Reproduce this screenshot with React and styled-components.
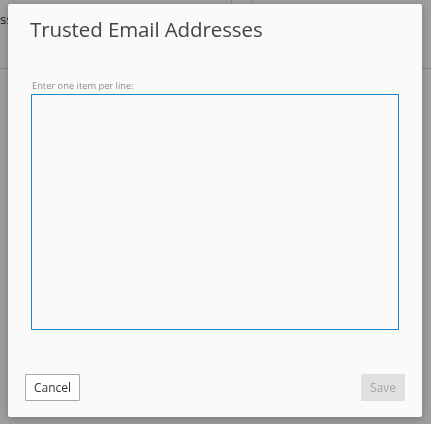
import React, { useState } from 'react'
import styled, { createGlobalStyle } from 'styled-components'

const Global = createGlobalStyle`
    html, body {
        margin: 0;
        padding: 0;
        background: #fff;
        font-family: "Open Sans", "Noto Sans", sans-serif;
    }
`

const Page = styled.div`
    width: 431px;
    height: 424px;
    overflow: hidden;
`

const Header = styled.div`
    display: flex;
    height: 68px;
    border-bottom: 1px solid #d8d8d8;
`

const HeaderCell = styled.div`
    width: ${p => p.$w}px;
    border-right: ${p => (p.$line ? '1px solid #d8d8d8' : 'none')};
    padding-top: 10px;
    font-size: 13px;
    color: #1d2a44;
    white-space: nowrap;
    overflow: hidden;
`

const Overlay = styled.div`
    position: fixed;
    inset: 0;
    background: rgba(0, 0, 0, 0.38);
    display: flex;
    align-items: flex-start;
    justify-content: flex-start;
    padding: 4px 0 0 8px;
`

const Dialog = styled.div`
    width: 414px;
    height: 413px;
    box-sizing: border-box;
    background: #fafafa;
    border-radius: 2px;
    box-shadow: 0 2px 8px rgba(0, 0, 0, 0.25);
    display: flex;
    flex-direction: column;
    padding: 10px 17px 16px 17px;
`

const Title = styled.h1`
    margin: 0 0 0 5px;
    font-weight: 400;
    font-size: 20.5px;
    line-height: 30px;
    color: #444;
    letter-spacing: -0.1px;
`

const Field = styled.div`
    display: flex;
    flex-direction: column;
    padding: 36px 6px 0 6px;
    flex: 1;
`

const Label = styled.label`
    font-size: 9.3px;
    line-height: 12px;
    color: #8a8a8a;
    margin: 0 0 2px 1px;
`

const Area = styled.textarea`
    width: 368px;
    height: 236px;
    box-sizing: border-box;
    border: 1px solid #1a86c4;
    background: #fafafa;
    resize: none;
    outline: none;
    font-family: inherit;
    font-size: 12px;
    padding: 4px;
`

const Footer = styled.div`
    display: flex;
    justify-content: space-between;
    align-items: center;
`

const Button = styled.button`
    height: 27px;
    padding: 0;
    font-family: inherit;
    font-size: 12px;
    border-radius: 1px;
    border: 1px solid ${p => (p.$primary ? '#e0e0e0' : '#a8a8a8')};
    background: ${p => (p.$primary ? '#e0e0e0' : '#fff')};
    color: ${p => (p.$primary ? '#a6a6a6' : '#333')};
    width: ${p => p.$w}px;
`

const App = () => {
    const [text, setText] = useState('')

    return (
        <Page>
            <Global />
            <Header>
                <HeaderCell $w={232} $line>ss</HeaderCell>
                <HeaderCell $w={20} $line />
                <HeaderCell $w={179} />
            </Header>
            <Overlay>
                <Dialog>
                    <Title>Trusted Email Addresses</Title>
                    <Field>
                        <Label htmlFor="trusted">Enter one item per line:</Label>
                        <Area id="trusted" value={text} onChange={e => setText(e.target.value)} />
                    </Field>
                    <Footer>
                        <Button $w={55}>Cancel</Button>
                        <Button $w={44} $primary disabled>Save</Button>
                    </Footer>
                </Dialog>
            </Overlay>
        </Page>
    )
}

export default App
